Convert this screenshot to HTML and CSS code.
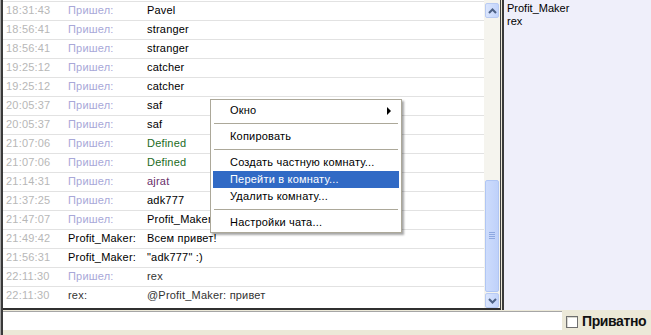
FILE: index.html
```html
<!DOCTYPE html>
<html lang="ru">
<head>
  <meta charset="UTF-8">
  <title>Чат</title>
  <link rel="stylesheet" href="styles.css">
</head>
<body>
  <div class="window">
    <div class="top">
      <div class="chat">
        <div class="log">
          <div class="row"><span class="time">18:31:43</span><span class="who join">Пришел:</span><span class="msg">Pavel</span></div>
          <div class="row"><span class="time">18:56:41</span><span class="who join">Пришел:</span><span class="msg">stranger</span></div>
          <div class="row"><span class="time">18:56:41</span><span class="who join">Пришел:</span><span class="msg">stranger</span></div>
          <div class="row"><span class="time">19:25:12</span><span class="who join">Пришел:</span><span class="msg">catcher</span></div>
          <div class="row"><span class="time">19:25:12</span><span class="who join">Пришел:</span><span class="msg">catcher</span></div>
          <div class="row"><span class="time">20:05:37</span><span class="who join">Пришел:</span><span class="msg">saf</span></div>
          <div class="row"><span class="time">20:05:37</span><span class="who join">Пришел:</span><span class="msg">saf</span></div>
          <div class="row"><span class="time">21:07:06</span><span class="who join">Пришел:</span><span class="msg green">Defined</span></div>
          <div class="row"><span class="time">21:07:06</span><span class="who join">Пришел:</span><span class="msg green">Defined</span></div>
          <div class="row"><span class="time">21:14:31</span><span class="who join">Пришел:</span><span class="msg purple">ajrat</span></div>
          <div class="row"><span class="time">21:37:25</span><span class="who join">Пришел:</span><span class="msg">adk777</span></div>
          <div class="row"><span class="time">21:47:07</span><span class="who join">Пришел:</span><span class="msg">Profit_Maker</span></div>
          <div class="row"><span class="time">21:49:42</span><span class="who">Profit_Maker:</span><span class="msg">Всем привет!</span></div>
          <div class="row"><span class="time">21:56:31</span><span class="who">Profit_Maker:</span><span class="msg">"adk777" :)</span></div>
          <div class="row"><span class="time">22:11:30</span><span class="who join">Пришел:</span><span class="msg dim">rex</span></div>
          <div class="row"><span class="time">22:11:30</span><span class="who dim">rex:</span><span class="msg dim">@Profit_Maker: привет</span></div>
        </div>
        <div class="vscroll">
          <div class="sbtn">
            <svg width="9" height="6" viewBox="0 0 9 6"><path d="M1 5 L4.5 1.5 L8 5" fill="none" stroke="#4d6185" stroke-width="2"/></svg>
          </div>
          <div class="track"><div class="thumb"><span class="grip"></span></div></div>
          <div class="sbtn">
            <svg width="9" height="6" viewBox="0 0 9 6"><path d="M1 1 L4.5 4.5 L8 1" fill="none" stroke="#4d6185" stroke-width="2"/></svg>
          </div>
        </div>
      </div>
      <div class="users">
        <div>Profit_Maker</div>
        <div>rex</div>
      </div>
    </div>
    <div class="bottom">
      <div class="input"></div>
      <label class="priv"><span class="box"></span>Приватно</label>
    </div>
  </div>

  <!-- контекстное меню -->
  <div class="menu">
    <div class="item">Окно<span class="arrow"></span></div>
    <div class="sep"></div>
    <div class="item">Копировать</div>
    <div class="sep"></div>
    <div class="item">Создать частную комнату...</div>
    <div class="item active">Перейти в комнату...</div>
    <div class="item">Удалить комнату...</div>
    <div class="sep"></div>
    <div class="item">Настройки чата...</div>
  </div>
</body>
</html>
```

FILE: styles.css
```css
body { margin: 0; background: #ece9d8; font-family: "Liberation Sans", Arial, sans-serif; font-size: 11px; letter-spacing: 0.2px; overflow: hidden; }
.window { margin-left: 1px; border-left: 2px solid #3a3a3a; box-shadow: -1px 0 #a5a5a5; height: 335px; display: flex; flex-direction: column; }
.top { display: flex; height: 310px; }
.chat { width: 497px; height: 308px; display: flex; background: #fff; border-right: 1px solid #404040; border-bottom: 2px solid #303030; }
.log { flex: 1; padding-top: 1px; }
.row { display: flex; height: 18px; line-height: 16px; border-top: 1px solid #e2e2e2; }
.time { width: 62px; padding-left: 3px; color: #b7b7b7; }
.who { width: 79px; color: #000; }
.who.join { color: #a8a8d8; }
.msg { color: #000; }
.green { color: #1d6b1d; }
.purple { color: #6a2f6a; }
.dim { color: #333; }
.vscroll { width: 16px; display: flex; flex-direction: column; background: #f5f4ee; padding-top: 3px; }
.sbtn { width: 14px; height: 15px; margin: 0 1px; border: 1px solid #b9cbf3; border-radius: 2px; background: linear-gradient(to right, #dbe6fd, #c3d4fb); display: flex; align-items: center; justify-content: center; box-sizing: border-box; }
.track { flex: 1; display: flex; flex-direction: column; justify-content: flex-end; padding: 1px 0; }
.thumb { height: 112px; margin: 0 1px; border: 1px solid #b0c6f4; border-radius: 2px; background: linear-gradient(to right, #cddcfc, #bfd1fa); display: flex; align-items: flex-end; justify-content: center; padding-bottom: 52px; box-sizing: border-box; }
.grip { width: 6px; height: 7px; background: repeating-linear-gradient(to bottom, #8ea8e0 0 1px, transparent 1px 2px); }
.users { flex: 1; margin-left: 1px; border-left: 2px solid #3a3a3a; background: #efeffa; padding: 2px 3px; line-height: 13px; color: #000; letter-spacing: 0; }
.bottom { display: flex; align-items: flex-start; }
.input { width: 559px; height: 18px; margin-top: 1px; background: #fff; border-top: 1px solid #a6a6a6; }
.priv { display: flex; align-items: center; margin-left: 4px; margin-top: 3px; line-height: 17px; font-size: 14px; font-weight: bold; color: #111; letter-spacing: -0.4px; white-space: nowrap; }
.box { width: 12px; height: 12px; border: 1px solid #6f6f6f; background: #fff; margin-right: 4px; box-sizing: border-box; box-shadow: inset 1px 1px #d8d8d0; }
.menu { position: absolute; left: 210px; top: 99px; width: 186px; background: #fff; border: 1px solid #aca899; padding: 2px 2px 1px; box-shadow: 2px 2px 2px rgba(0,0,0,0.35); }
.item { position: relative; height: 17px; line-height: 17px; padding-left: 17px; color: #000; }
.item.active { background: #316ac5; color: #fff; }
.arrow { position: absolute; right: 8px; top: 5px; border-left: 4px solid #000; border-top: 4px solid transparent; border-bottom: 4px solid transparent; }
.sep { height: 9px; position: relative; }
.sep::after { content: ""; position: absolute; left: 1px; right: 1px; top: 4px; border-top: 1px solid #aca899; }
```
